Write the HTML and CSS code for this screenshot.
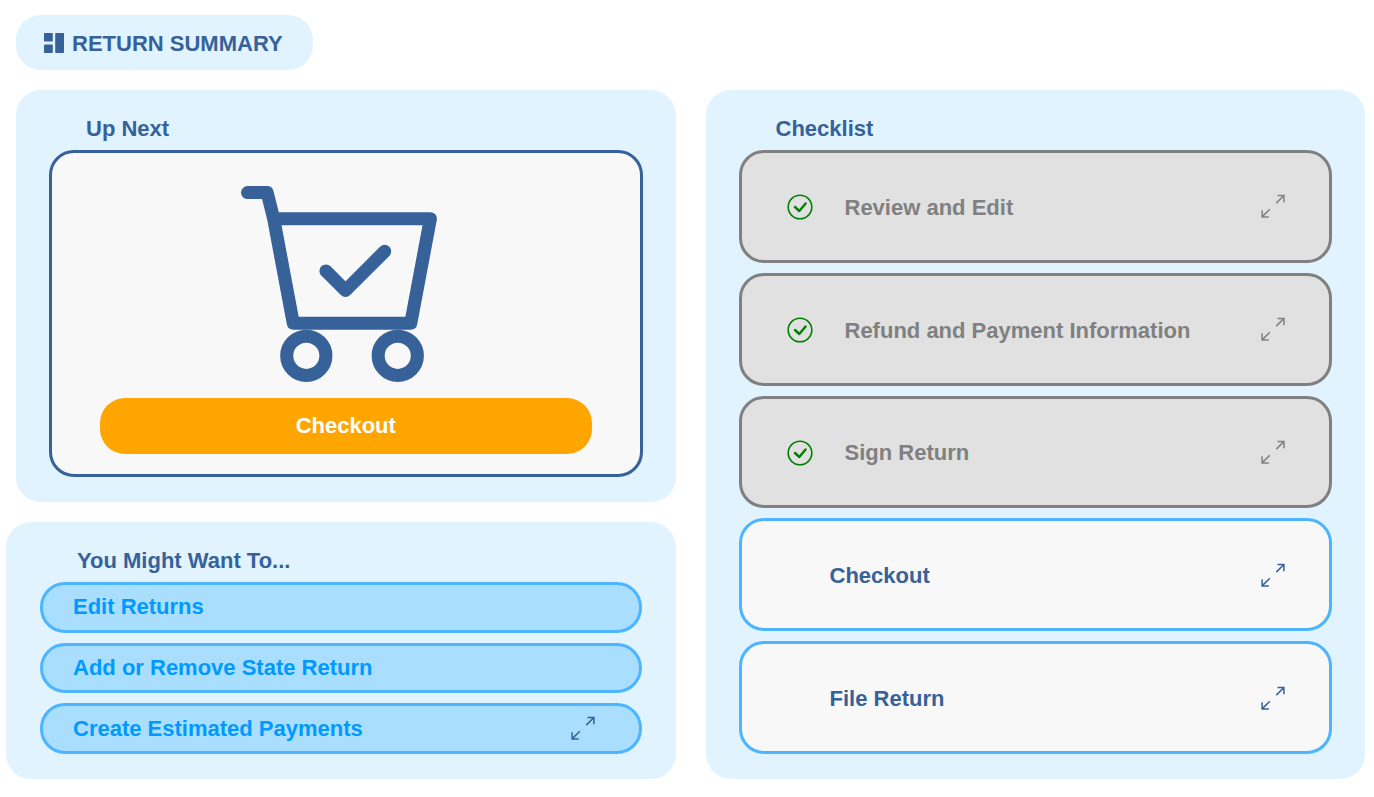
FILE: index.html
```
<!DOCTYPE html>
<html lang="en">
<head>
    <meta charset="UTF-8">
    <meta name="viewport" content="width=device-width, initial-scale=1.0">
    <title>Return Summary</title>
    <link rel="stylesheet" href="styles.css">
</head>
<body>
    <!-- icons used more than once -->
    <svg class="sprite" aria-hidden="true">
        <symbol id="expand" viewBox="0 0 24 24">
            <path d="M16.5 1.5H22.9V8.3M22.9 1.5L15.3 9.1M1.1 16.2V22.9H7.8M1.1 22.9L8.8 15.2" fill="none" stroke="currentColor" stroke-width="1.5"/>
        </symbol>
        <symbol id="done" viewBox="0 0 26 26">
            <circle cx="13" cy="13" r="11.8" fill="none" stroke="currentColor" stroke-width="1.6"/>
            <path d="M8 13L12.3 17L18.6 9.4" fill="none" stroke="currentColor" stroke-width="2.4" stroke-linecap="round" stroke-linejoin="round"/>
        </symbol>
    </svg>

    <header class="page-title">
        <svg class="dash-icon" viewBox="0 0 20 20" aria-hidden="true">
            <rect x="0" y="0" width="8.8" height="8.6" rx="0.8"/>
            <rect x="0" y="11.4" width="8.8" height="8.6" rx="0.8"/>
            <rect x="11.2" y="0" width="8.8" height="20" rx="0.8"/>
        </svg>
        <h1>RETURN SUMMARY</h1>
    </header>

    <main class="summary">
        <div class="left">
            <section class="card">
                <h2>Up Next</h2>
                <div class="next-box">
                    <svg class="cart" viewBox="0 0 32 32" aria-hidden="true">
                        <path d="M1 1H4L5 5H29L26 21H8L5 5M13 13L16 16L22 10"/>
                        <circle cx="10" cy="26" r="3"/>
                        <circle cx="24" cy="26" r="3"/>
                    </svg>
                    <button class="checkout">Checkout</button>
                </div>
            </section>

            <section class="card suggestions">
                <h2>You Might Want To...</h2>
                <div class="list">
                    <button class="item option">Edit Returns</button>
                    <button class="item option">Add or Remove State Return</button>
                    <button class="item option">
                        Create Estimated Payments
                        <svg class="expand"><use href="#expand"/></svg>
                    </button>
                </div>
            </section>
        </div>

        <section class="card">
            <h2>Checklist</h2>
            <div class="list">
                <button class="item step complete">
                    <svg class="done"><use href="#done"/></svg>
                    Review and Edit
                    <svg class="expand"><use href="#expand"/></svg>
                </button>
                <button class="item step complete">
                    <svg class="done"><use href="#done"/></svg>
                    Refund and Payment Information
                    <svg class="expand"><use href="#expand"/></svg>
                </button>
                <button class="item step complete">
                    <svg class="done"><use href="#done"/></svg>
                    Sign Return
                    <svg class="expand"><use href="#expand"/></svg>
                </button>
                <button class="item step">
                    Checkout
                    <svg class="expand"><use href="#expand"/></svg>
                </button>
                <button class="item step">
                    File Return
                    <svg class="expand"><use href="#expand"/></svg>
                </button>
            </div>
        </section>
    </main>
</body>
</html>
```

FILE: styles.css
```
* {
    box-sizing: border-box;
}

body {
    display: flex;
    flex-direction: column;
    min-height: 100vh;
    margin: 0;
    padding: 15px 9px 18px 16px;
    background-color: white;
    color: #366299;
    font-family: "Liberation Sans", Arial, sans-serif;
    font-size: 22px;
    font-weight: bold;
    line-height: 25px;
}

h1, h2 {
    margin: 0;
    font-size: 22px;
}

button {
    font: inherit;
    cursor: pointer;
}

.sprite {
    display: none;
}

.page-title {
    display: flex;
    align-items: center;
    align-self: flex-start;
    gap: 8px;
    margin-bottom: 20px;
    padding: 16px 30px 14px 28px;
    border-radius: 25px;
    background-color: #e0f3ff;
}

.dash-icon {
    width: 20px;
    height: 20px;
    margin-bottom: 2px;
    fill: #366299;
}

.summary {
    flex: 1;
    display: grid;
    grid-template-columns: 1fr 1fr;
    gap: 30px;
}

.left {
    display: flex;
    flex-direction: column;
    gap: 20px;
}

.card {
    display: flex;
    flex-direction: column;
    padding: 26px 33px 25px;
    border-radius: 25px;
    background-color: #e0f3ff;
}

.card h2 {
    margin-bottom: 9px;
    padding-left: 37px;
}

.next-box {
    display: flex;
    flex-direction: column;
    align-items: center;
    gap: 3px;
    padding: 33px 48px 20px;
    border: 3px solid #366299;
    border-radius: 25px;
    background-color: #f8f8f8;
}

.cart {
    width: 209px;
    height: 209px;
    fill: none;
    stroke: #366299;
    stroke-width: 2;
    stroke-linecap: round;
    stroke-linejoin: round;
}

.checkout {
    width: 100%;
    height: 56px;
    padding: 0 0 2px;
    border: none;
    border-radius: 25px;
    background-color: orange;
    color: white;
}

/* this card sticks out a little to the left */
.suggestions {
    flex: 1;
    margin-left: -10px;
    padding-left: 34px;
    padding-right: 34px;
}

.list {
    flex: 1;
    display: flex;
    flex-direction: column;
    gap: 10px;
}

.item {
    flex: 1;
    display: flex;
    align-items: center;
    border: 3px solid #4db5ff;
    border-radius: 25px;
    text-align: left;
}

.option {
    padding: 0 44px 1px 30px;
    background-color: #a9deff;
    color: #0099ff;
}

.step {
    padding: 2px 44px 0 88px;
    background-color: #f8f8f8;
    color: #366299;
}

.complete {
    padding-left: 45px;
    border-color: gray;
    background-color: #e1e1e1;
    color: gray;
}

.done {
    width: 26px;
    height: 26px;
    margin-right: 32px;
    color: green;
}

.expand {
    width: 24px;
    height: 24px;
    margin-left: auto;
    color: #366299;
}

.step .expand {
    margin-bottom: 2px;
}

.complete .expand {
    color: gray;
}
```
